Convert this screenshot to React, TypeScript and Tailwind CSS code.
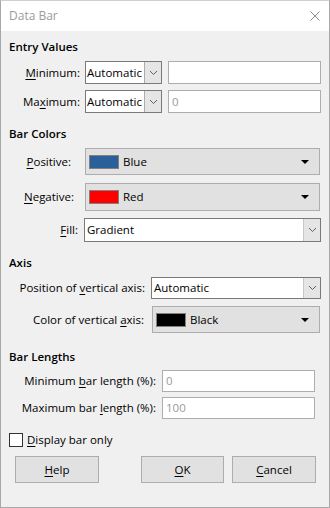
import React from 'react';

const FONT = { fontFamily: '"Open Sans", "Noto Sans", Arial, sans-serif' };

// Underlined mnemonic letter
function U({ children }: { children: React.ReactNode }) {
  return <span className="underline underline-offset-2">{children}</span>;
}

function Chevron() {
  return (
    <svg width="9" height="6" viewBox="0 0 9 6" className="text-[#606060]">
      <path d="M1 1 L4.5 4.5 L8 1" fill="none" stroke="currentColor" strokeWidth="1" />
    </svg>
  );
}

function Triangle() {
  return (
    <svg width="8" height="4" viewBox="0 0 8 4">
      <path d="M0 0 H8 L4 4 Z" fill="#000" />
    </svg>
  );
}

// Small combo: "Automatic" with a separate grey drop button
function SmallCombo() {
  return (
    <div className="flex h-[23px] w-[77px] border border-[#7a7a7a] bg-white">
      <div className="flex-1 flex items-center pl-[1px] text-[11.5px] text-black overflow-hidden whitespace-nowrap">Automatic</div>
      <div className="w-[17px] shrink-0 flex items-center justify-center bg-[#e5e5e5] border-l border-[#adadad]">
        <Chevron />
      </div>
    </div>
  );
}

// Wide combo with a white body and a grey drop area on the right
function WideCombo({ value, className }: { value: string; className: string }) {
  return (
    <div className={`flex border border-[#7a7a7a] bg-white ${className}`}>
      <div className="flex-1 flex items-center pl-[2px] text-[11.5px] text-black">{value}</div>
      <div className="w-[17px] flex items-center justify-center bg-[#e5e5e5] border-l border-[#c8c8c8]">
        <Chevron />
      </div>
    </div>
  );
}

function ColorButton({ color, name, className }: { color: string; name: string; className: string }) {
  return (
    <div className={`flex items-center border border-[#adadad] bg-[#e1e1e1] pl-[3px] pr-[10px] ${className}`}>
      <div className="w-[30px] h-[14px] border border-[#808080]" style={{ backgroundColor: color }} />
      <span className="ml-[4px] flex-1 text-[11.5px] text-black">{name}</span>
      <Triangle />
    </div>
  );
}

function TextInput({ value, className }: { value?: string; className: string }) {
  return (
    <div className={`flex items-center border border-[#adadad] bg-white pl-[3px] text-[11.5px] text-[#9a9a9a] ${className}`}>
      {value}
    </div>
  );
}

function Heading({ children, className = '' }: { children: React.ReactNode; className?: string }) {
  return <div className={`h-[16px] leading-[16px] text-[11.5px] font-semibold text-black ${className}`}>{children}</div>;
}

function Button({ children, className = '' }: { children: React.ReactNode; className?: string }) {
  return (
    <div className={`h-[27px] flex items-center justify-center border border-[#adadad] bg-[#e1e1e1] text-[11.5px] text-black ${className}`}>
      {children}
    </div>
  );
}

export default function App() {
  return (
    <div className="w-[330px] h-[508px] flex flex-col bg-[#f0f0f0] border border-[#a8a8a8] border-t-[#d0d0d0]" style={FONT}>
      {/* Title bar */}
      <div className="h-[30px] shrink-0 bg-white flex items-center justify-between pl-[8px] pr-[8px]">
        <span className="text-[12px] text-[#9b9b9b]">Data Bar</span>
        <svg width="10" height="10" viewBox="0 0 10 10" className="mr-[1px]">
          <path d="M0.5 0.5 L9.5 9.5 M9.5 0.5 L0.5 9.5" stroke="#8a8a8a" strokeWidth="1" />
        </svg>
      </div>

      <div className="flex-1 flex flex-col pl-[8px] pr-[7px] pt-[8px] text-[11.5px]">
        {/* Entry Values */}
        <Heading>Entry Values</Heading>
        <div className="mt-[6px] flex items-center">
          <div className="w-[71px] text-right text-black"><U>M</U>inimum:</div>
          <div className="ml-[5px]"><SmallCombo /></div>
          <TextInput className="ml-[6px] h-[23px] w-[153px]" />
        </div>
        <div className="mt-[6px] flex items-center">
          <div className="w-[71px] text-right text-black">Ma<U>x</U>imum:</div>
          <div className="ml-[5px]"><SmallCombo /></div>
          <TextInput value="0" className="ml-[6px] h-[23px] w-[153px]" />
        </div>

        {/* Bar Colors */}
        <Heading className="mt-[13px]">Bar Colors</Heading>
        <div className="mt-[6px] flex items-center">
          <div className="w-[62px] text-right text-black"><U>P</U>ositive:</div>
          <ColorButton color="#2a6099" name="Blue" className="ml-[14px] h-[27px] w-[235px]" />
        </div>
        <div className="mt-[8px] flex items-center">
          <div className="w-[65px] text-right text-black"><U>N</U>egative:</div>
          <ColorButton color="#ff0000" name="Red" className="ml-[11px] h-[28px] w-[235px]" />
        </div>
        <div className="mt-[7px] flex items-center">
          <div className="w-[69px] text-right text-black"><U>F</U>ill:</div>
          <WideCombo value="Gradient" className="ml-[6px] h-[24px] w-[237px]" />
        </div>

        {/* Axis */}
        <Heading className="mt-[13px]">Axis</Heading>
        <div className="mt-[6px] flex items-center">
          <div className="w-[136px] text-right text-black">Position of <U>v</U>ertical axis:</div>
          <WideCombo value="Automatic" className="ml-[6px] h-[22px] w-[170px]" />
        </div>
        <div className="mt-[7px] flex items-center">
          <div className="w-[135px] text-right text-black">Color of vertical <U>a</U>xis:</div>
          <ColorButton color="#000000" name="Black" className="ml-[8px] h-[27px] w-[168px]" />
        </div>

        {/* Bar Lengths */}
        <Heading className="mt-[16px]">Bar Lengths</Heading>
        <div className="mt-[5px] flex items-center">
          <div className="w-[147px] text-right text-black">Minimum <U>b</U>ar length (%):</div>
          <TextInput value="0" className="ml-[6px] h-[22px] w-[153px]" />
        </div>
        <div className="mt-[5px] flex items-center">
          <div className="w-[147px] text-right text-black">Maximum bar <U>l</U>ength (%):</div>
          <TextInput value="100" className="ml-[6px] h-[22px] w-[153px]" />
        </div>

        {/* Checkbox */}
        <div className="mt-[14px] flex items-center h-[14px]">
          <div className="w-[14px] h-[14px] border border-[#333] bg-white" />
          <span className="ml-[4px] text-black"><U>D</U>isplay bar only</span>
        </div>

        {/* Buttons */}
        <div className="mt-[9px] flex items-center">
          <Button className="ml-[6px] w-[84px]"><U>H</U>elp</Button>
          <Button className="ml-[42px] w-[83px]"><U>O</U>K</Button>
          <Button className="ml-[8px] w-[84px]"><U>C</U>ancel</Button>
        </div>
      </div>
    </div>
  );
}
